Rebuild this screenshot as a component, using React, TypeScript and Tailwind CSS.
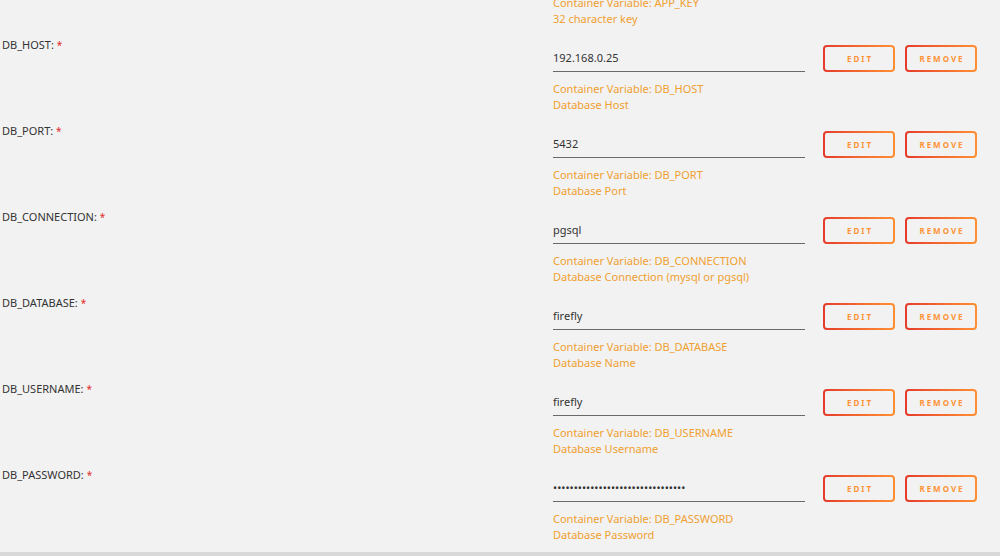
const rows = [
  { name: 'APP_KEY', value: 'SomeRandomStringOf32CharsExactly', note: '32 character key' },
  { name: 'DB_HOST', value: '192.168.0.25', note: 'Database Host' },
  { name: 'DB_PORT', value: '5432', note: 'Database Port' },
  { name: 'DB_CONNECTION', value: 'pgsql', note: 'Database Connection (mysql or pgsql)' },
  { name: 'DB_DATABASE', value: 'firefly', note: 'Database Name' },
  { name: 'DB_USERNAME', value: 'firefly', note: 'Database Username' },
  { name: 'DB_PASSWORD', value: '', note: 'Database Password', secret: true },
]

function OutlineButton({ label }: { label: string }) {
  return (
    <div className="w-[72px] h-[27px] rounded-[4px] p-[2px] bg-linear-to-r from-[#e53a2c] to-[#ff8f33]">
      <div className="w-full h-full rounded-[2px] bg-[#f2f2f2] flex items-center justify-center text-[8px] font-bold tracking-[2px] text-[#ff9236] pl-[2px]">
        {label}
      </div>
    </div>
  )
}

export default function App() {
  return (
    <div
      className="w-[1000px] h-[556px] overflow-hidden bg-[#f2f2f2] flex flex-col"
      style={{ fontFamily: '"Noto Sans", "Open Sans", sans-serif' }}
    >
      <div className="flex-1 overflow-hidden">
        <div className="-mt-[49px]">
          {rows.map(r => (
            <div key={r.name} className="h-[86px] flex">
              {/* label */}
              <div className="w-[553px] pl-[2px] text-[11px] leading-[16px] text-[#333]">
                {r.name}: <span className="text-[#e22828] text-[10px] align-top">*</span>
              </div>

              {/* value + notes */}
              <div className="w-[252px] flex flex-col">
                <div className="h-[35px] border-b-[1.5px] border-[#6a6a6a] pt-[13px] text-[11px] leading-[16px] text-[#333]">
                  {r.secret ? (
                    <span className="text-[11px] tracking-[0px]">{'•'.repeat(32)}</span>
                  ) : (
                    r.value
                  )}
                </div>
                <div className="mt-[9px] text-[11px] leading-[16px] text-[#f0a030]">
                  <div>Container Variable: {r.name}</div>
                  <div>{r.note}</div>
                </div>
              </div>

              {/* actions */}
              <div className="flex gap-[10px] pl-[18px] pt-[8px]">
                <OutlineButton label="EDIT" />
                <OutlineButton label="REMOVE" />
              </div>
            </div>
          ))}
        </div>
      </div>
      <div className="h-[4px] bg-[#d9d9d9]" />
    </div>
  )
}
